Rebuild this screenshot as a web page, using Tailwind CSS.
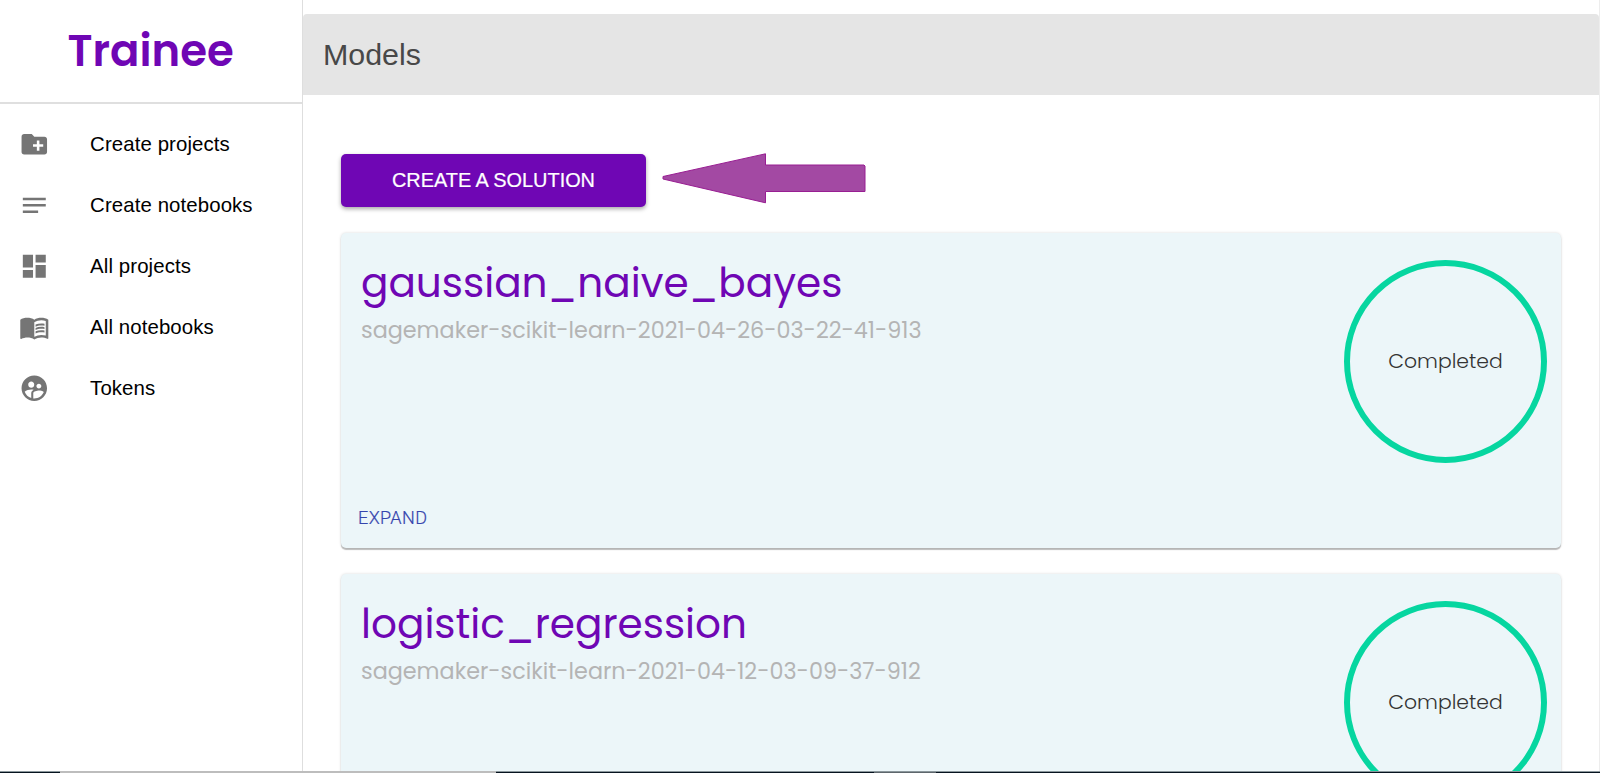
<!DOCTYPE html>
<html lang="en">
<head>
<meta charset="utf-8">
<title>Trainee</title>
<script src="https://cdn.jsdelivr.net/npm/@tailwindcss/browser@4"></script>
</head>
<body class="relative flex h-[773px] w-[1600px] overflow-hidden bg-white font-['Liberation_Sans',sans-serif]">
<aside class="h-full w-[303px] shrink-0 border-r border-[#dedede]">
  <div class="flex h-[104px] items-center border-b-2 border-[#dfdfdf] pl-[67.500px]">
    <span class="font-['Poppins','Inter',sans-serif] text-[43.4px] leading-[60px] font-semibold text-[#6f06b4]">Trainee</span>
  </div>
  <nav class="flex flex-col pt-[10px] text-[20.4px] tracking-[0.1px] text-black">
    <a class="flex h-[60.900px] items-center pl-[19px]"><svg class="mr-[40.500px] size-[30.600px] fill-[#757575]" viewBox="0 0 24 24"><path d="M20 6h-8l-2-2H4c-1.11 0-1.99.89-1.99 2L2 18c0 1.11.89 2 2 2h16c1.11 0 2-.89 2-2V8c0-1.11-.89-2-2-2zm-1 8h-3v3h-2v-3h-3v-2h3V9h2v3h3v2z"/></svg>Create projects</a>
    <a class="flex h-[60.900px] items-center pl-[19px]"><svg class="mr-[40.500px] size-[30.600px] fill-[#757575]" viewBox="0 0 24 24"><path d="M3 18h12v-2H3v2zM3 6v2h18V6H3zm0 7h18v-2H3v2z"/></svg>Create notebooks</a>
    <a class="flex h-[60.900px] items-center pl-[19px]"><svg class="mr-[40.500px] size-[30.600px] fill-[#757575]" viewBox="0 0 24 24"><path d="M3 13h8V3H3v10zm0 8h8v-6H3v6zm10 0h8V11h-8v10zm0-18v6h8V3h-8z"/></svg>All projects</a>
    <a class="flex h-[60.900px] items-center pl-[19px]"><svg class="mr-[40.500px] size-[30.600px] fill-[#757575]" viewBox="0 0 24 24"><path d="M17.5 4.5c-1.95 0-4.05.4-5.5 1.5-1.45-1.1-3.55-1.5-5.5-1.5S2.450 4.9 1 6v14.650c0 .65.730.45.750.45C3.100 20.450 5.050 20 6.500 20c1.950 0 4.050.4 5.500 1.500 1.350-.85 3.800-1.500 5.500-1.500 1.650 0 3.350.3 4.750 1.050.41.210.75-.19.75-.45V6c-1.490-1.120-3.630-1.500-5.500-1.500zm3.500 14c-1.100-.35-2.300-.5-3.500-.5-1.700 0-4.150.65-5.500 1.500V8c1.350-.85 3.800-1.500 5.500-1.500 1.200 0 2.400.150 3.500.5v11.500z"/><path d="M17.500 10.500c.88 0 1.730.09 2.500.26V9.240c-.79-.15-1.640-.24-2.500-.24-1.700 0-3.240.29-4.500.83v1.660c1.130-.64 2.700-.99 4.500-.99zM13 12.490v1.660c1.130-.64 2.700-.99 4.500-.99.88 0 1.730.09 2.500.26V11.900c-.79-.15-1.640-.24-2.500-.24-1.700 0-3.240.3-4.500.83zM17.500 14.330c-1.700 0-3.240.29-4.500.83v1.660c1.130-.64 2.700-.99 4.500-.99.88 0 1.730.09 2.500.26v-1.520c-.79-.16-1.640-.24-2.500-.24z"/></svg>All notebooks</a>
    <a class="flex h-[60.900px] items-center pl-[19px]"><svg class="mr-[40.500px] size-[30.600px] fill-[#757575]" viewBox="0 0 24 24"><path d="M11.990 2c-5.520 0-10 4.480-10 10s4.480 10 10 10 10-4.480 10-10-4.480-10-10-10zm3.610 6.340c1.070 0 1.930.86 1.930 1.930s-.86 1.930-1.930 1.930-1.930-.86-1.930-1.930c-.01-1.070.86-1.930 1.930-1.930zm-6-1.580c1.300 0 2.360 1.060 2.360 2.360s-1.060 2.360-2.360 2.360-2.360-1.060-2.360-2.360c0-1.310 1.050-2.360 2.360-2.360zm0 9.130v3.750c-2.400-.75-4.300-2.600-5.140-4.960 1.050-1.120 3.670-1.690 5.140-1.690.53 0 1.200.08 1.900.22-1.640.87-1.900 2.020-1.900 2.680zM11.990 20c-.27 0-.53-.01-.79-.04v-4.070c0-1.420 2.940-2.130 4.400-2.130 1.070 0 2.920.39 3.840 1.150C18.270 17.880 15.380 20 11.990 20z"/></svg>Tokens</a>
  </nav>
</aside>
<main class="flex min-w-0 flex-1 flex-col border-r border-[#ededed] pt-[14px]">
  <header class="flex h-[81px] shrink-0 items-center rounded-t bg-[#e5e5e5] pl-[20px] text-[30.4px] text-[#484848]">Models</header>
  <div class="flex h-[678px] flex-col overflow-hidden px-[38px] pt-[59px]">
    <div class="flex h-[53px] shrink-0 items-center">
      <button class="h-[53px] w-[305px] rounded-[5px] bg-[#6f06b4] text-[19.9px] text-white shadow-[0_2px_4px_rgba(0,0,0,0.35)]"><span class="[-webkit-text-stroke:0.2px_white]">CREATE A SOLUTION</span></button>
      <svg class="mb-[2px] ml-[15px] h-[54px] w-[206px]" viewBox="0 0 206 54"><path d="M2 23.500L104.500 .8V12H203L204 13V38.500H104.500V49.800L2 26Z" fill="#a349a3" stroke="#981e92" stroke-width="1"/></svg>
    </div>
    <section class="mt-[26px] flex h-[315px] shrink-0 justify-between rounded-[5px] bg-[#ecf6f9] pr-[14px] pl-[17px] shadow-[0_2px_1px_rgba(0,0,0,0.25),0_0_3px_rgba(0,0,0,0.15)]">
      <div class="flex flex-col items-start pt-[22px]">
        <h2 class="pl-[3px] font-['Poppins','Inter',sans-serif] text-[40.6px] leading-[55px] font-normal text-[#6f06b4]">gaussian_naive_bayes</h2>
        <p class="mt-[3px] pl-[3px] font-['Poppins','Inter',sans-serif] text-[22.3px] leading-[36px] text-[#b4b4b4]">sagemaker-scikit-learn-2021-04-26-03-22-41-913</p>
        <button class="mt-[157px] font-['Roboto',sans-serif] text-[18px] leading-[24px] font-light tracking-[0.4px] text-[#3545ad] [-webkit-text-stroke:0.2px_#3545ad]">EXPAND</button>
      </div>
      <div class="mt-[27px] flex size-[203px] items-center justify-center rounded-full border-6 border-[#06d6a0] font-['Poppins','Inter',sans-serif] text-[20.4px] font-light text-[#333]">Completed</div>
    </section>
    <section class="mt-[26px] flex h-[315px] shrink-0 justify-between rounded-[5px] bg-[#ecf6f9] pr-[14px] pl-[17px] shadow-[0_2px_1px_rgba(0,0,0,0.25),0_0_3px_rgba(0,0,0,0.15)]">
      <div class="flex flex-col items-start pt-[22px]">
        <h2 class="pl-[3px] font-['Poppins','Inter',sans-serif] text-[40.6px] leading-[55px] font-normal text-[#6f06b4]">logistic_regression</h2>
        <p class="mt-[3px] pl-[3px] font-['Poppins','Inter',sans-serif] text-[22.3px] leading-[36px] text-[#b4b4b4]">sagemaker-scikit-learn-2021-04-12-03-09-37-912</p>
      </div>
      <div class="mt-[27px] flex size-[203px] items-center justify-center rounded-full border-6 border-[#06d6a0] font-['Poppins','Inter',sans-serif] text-[20.4px] font-light text-[#333]">Completed</div>
    </section>
  </div>
</main>
<div class="absolute bottom-0 left-0 flex h-[2px] w-full border-t border-[#8b979c] bg-[#06131f]">
  <div class="-mt-px ml-[60px] h-[2px] w-[436px] bg-[#bdbdbd]"></div>
  <div class="ml-[378px] h-px w-[62px] bg-[#5d666c]"></div>
</div>
</body>
</html>
